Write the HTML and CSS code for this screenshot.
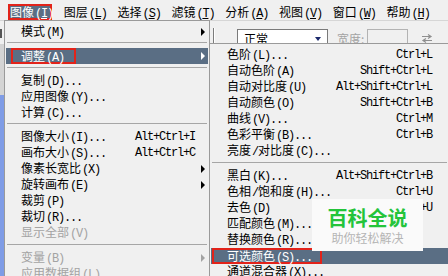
FILE: index.html
```html
<!DOCTYPE html>
<html lang="zh-CN">
<head>
	<meta charset="UTF-8">
	<meta name="viewport" content="width=device-width, initial-scale=1.0">
	<title>图像 - 调整</title>
	<link rel="stylesheet" href="styles.css">
</head>
<body>
	<div class="menubar">
		<div class="mb-item on">图像<span class="mk">(<u>I</u>)</span></div>
		<div class="mb-item">图层<span class="mk">(<u>L</u>)</span></div>
		<div class="mb-item">选择<span class="mk">(<u>S</u>)</span></div>
		<div class="mb-item">滤镜<span class="mk">(<u>T</u>)</span></div>
		<div class="mb-item">分析<span class="mk">(<u>A</u>)</span></div>
		<div class="mb-item">视图<span class="mk">(<u>V</u>)</span></div>
		<div class="mb-item">窗口<span class="mk">(<u>W</u>)</span></div>
		<div class="mb-item">帮助<span class="mk">(<u>H</u>)</span></div>
	</div>

	<div class="options">
		<span class="edge"></span>
		<span class="grip"></span>
		<div class="select"><span>正常</span><i class="caret"></i></div>
		<span class="field-label">宽度:</span>
		<span class="field"></span>
		<svg class="swap" width="12" height="9" viewBox="0 0 12 9">
			<path d="M1 2.5H9M7 0.5L10 2.5L7 4.5" fill="none" stroke="#8f8f8f" stroke-width="1.2"/>
			<path d="M11 6.5H3M5 4.5L2 6.5L5 8.5" fill="none" stroke="#8f8f8f" stroke-width="1.2"/>
		</svg>
	</div>

	<div class="workspace">
		<div class="dock"></div>
	</div>

	<!-- 图像 menu -->
	<div class="menu main">
		<div class="item"><span class="label">模式<span class="k">(M)</span></span><span class="arr"><i class="tri"></i></span></div>
		<div class="sep tight"></div>
		<div class="item on"><span class="label"><span class="mark">调整<span class="k">(A)</span></span></span><span class="arr"><i class="tri"></i></span></div>
		<div class="sep"></div>
		<div class="item"><span class="label">复制<span class="k">(D)...</span></span><span class="arr"></span></div>
		<div class="item"><span class="label">应用图像<span class="k">(Y)...</span></span><span class="arr"></span></div>
		<div class="item"><span class="label">计算<span class="k">(C)...</span></span><span class="arr"></span></div>
		<div class="sep tight"></div>
		<div class="item"><span class="label">图像大小<span class="k">(I)...</span></span><span class="sc">Alt+Ctrl+I</span><span class="arr"></span></div>
		<div class="item"><span class="label">画布大小<span class="k">(S)...</span></span><span class="sc">Alt+Ctrl+C</span><span class="arr"></span></div>
		<div class="item"><span class="label">像素长宽比<span class="k">(X)</span></span><span class="arr"><i class="tri"></i></span></div>
		<div class="item"><span class="label">旋转画布<span class="k">(E)</span></span><span class="arr"><i class="tri"></i></span></div>
		<div class="item"><span class="label">裁剪<span class="k">(P)</span></span><span class="arr"></span></div>
		<div class="item"><span class="label">裁切<span class="k">(R)...</span></span><span class="arr"></span></div>
		<div class="item off"><span class="label">显示全部<span class="k">(V)</span></span><span class="arr"></span></div>
		<div class="sep"></div>
		<div class="item off"><span class="label">变量<span class="k">(B)</span></span><span class="arr"><i class="tri"></i></span></div>
		<div class="item off"><span class="label">应用数据组<span class="k">(L)...</span></span><span class="arr"></span></div>
	</div>

	<!-- 调整 submenu -->
	<div class="menu sub">
		<div class="item"><span class="label">色阶<span class="k">(L)...</span></span><span class="sc">Ctrl+L</span><span class="arr"></span></div>
		<div class="item"><span class="label">自动色阶<span class="k">(A)</span></span><span class="sc">Shift+Ctrl+L</span><span class="arr"></span></div>
		<div class="item"><span class="label">自动对比度<span class="k">(U)</span></span><span class="sc">Alt+Shift+Ctrl+L</span><span class="arr"></span></div>
		<div class="item"><span class="label">自动颜色<span class="k">(O)</span></span><span class="sc">Shift+Ctrl+B</span><span class="arr"></span></div>
		<div class="item"><span class="label">曲线<span class="k">(V)...</span></span><span class="sc">Ctrl+M</span><span class="arr"></span></div>
		<div class="item"><span class="label">色彩平衡<span class="k">(B)...</span></span><span class="sc">Ctrl+B</span><span class="arr"></span></div>
		<div class="item"><span class="label">亮度<span class="k">/</span>对比度<span class="k">(C)...</span></span><span class="arr"></span></div>
		<div class="sep"></div>
		<div class="item"><span class="label">黑白<span class="k">(K)...</span></span><span class="sc">Alt+Shift+Ctrl+B</span><span class="arr"></span></div>
		<div class="item"><span class="label">色相<span class="k">/</span>饱和度<span class="k">(H)...</span></span><span class="sc">Ctrl+U</span><span class="arr"></span></div>
		<div class="item"><span class="label">去色<span class="k">(D)</span></span><span class="sc">Shift+Ctrl+U</span><span class="arr"></span></div>
		<div class="item"><span class="label">匹配颜色<span class="k">(M)...</span></span><span class="arr"></span></div>
		<div class="item"><span class="label">替换颜色<span class="k">(R)...</span></span><span class="arr"></span></div>
		<div class="item on"><span class="label"><span class="mark wide">可选颜色<span class="k">(S)...</span></span></span><span class="arr"></span></div>
		<div class="item"><span class="label">通道混合器<span class="k">(X)...</span></span><span class="arr"></span></div>
	</div>

	<div class="watermark">
		<div class="wm-title">百科全说</div>
		<div class="wm-sub">助你轻松解决</div>
	</div>
</body>
</html>
```

FILE: styles.css
```css
body {
    margin: 0;
    width: 448px;
    height: 276px;
    overflow: hidden;
    position: relative;
    background: #f0f0f0;
    color: #000;
    font: 12px "Noto Sans CJK SC", sans-serif;
}

/* top menu bar */
.menubar {
    display: flex;
    gap: 9.8px;
    height: 21px;
    padding: 4px 0 0 8px;
    box-sizing: border-box;
    border-bottom: 1px solid #d6d6d6;
}

.mb-item {
    width: 44px;
    height: 16px;
    line-height: 16px;
    padding-left: 2px;
    box-sizing: border-box;
    white-space: nowrap;
}

.mb-item.on {
    background: #5a6e84;
    color: #fff;
    box-shadow: inset 0 0 0 2px #e2231a;
}

/* latin parts keep the 6px half-width cells of the old bitmap font */
.mk, .k, .sc {
    font: 12px/16px "Liberation Mono", monospace;
    letter-spacing: -1.2px;
}

.k, .mk {
    padding-left: 1px;
}

/* options bar */
.options {
    display: flex;
    align-items: flex-start;
    height: 23px;
    padding-top: 8px;
    box-sizing: border-box;
}

.edge {
    width: 2px;
    height: 9px;
    background: #555;
}

.grip {
    width: 1px;
    height: 16px;
    margin: -1px 0 0 211px;
    background: #7c7c7c;
    border-right: 1px solid #fff;
}

.select {
    display: flex;
    align-items: center;
    width: 91px;
    height: 20px;
    margin-left: 22px;
    padding-left: 6px;
    box-sizing: border-box;
    background: #fff;
    border: 1px solid #7a7a7a;
    line-height: 18px;
}

.caret {
    margin: 0 6px 0 auto;
    border-top: 4px solid #1c2a6c;
    border-left: 3.5px solid transparent;
    border-right: 3.5px solid transparent;
}

.field-label {
    width: 30px;
    margin-left: 9px;
    line-height: 20px;
    color: #a3a3a3;
}

.field {
    width: 41px;
    height: 20px;
    box-sizing: border-box;
    border: 1px solid #b3b3b3;
}

.swap {
    margin: 5px 0 0 13px;
}

.workspace {
    height: 232px;
    display: flex;
}

.dock {
    width: 4px;
    background: linear-gradient(#d4d4d4 0 51px, #7f9ce6 51px);
}

/* dropdown menus */
.menu {
    position: absolute;
    background: #f0f0f0;
    border: 1px solid #9a9a9a;
    padding: 3px 1px;
    box-sizing: border-box;
}

.menu.main {
    left: 4px;
    top: 20px;
    width: 206px;
    z-index: 1;
}

.menu.sub {
    left: 209px;
    top: 43px;
    width: 241px;
    z-index: 2;
}

.item {
    display: flex;
    align-items: center;
    height: 16px;
    line-height: 16px;
    padding-left: 15px;
    white-space: nowrap;
}

.sub .item {
    padding-left: 16px;
    padding-right: 3px;
}

.item .label {
    flex: 1;
}

.item .arr {
    width: 13px;
    height: 16px;
    display: flex;
    align-items: center;
    justify-content: flex-end;
    padding-right: 3px;
    box-sizing: border-box;
}

.tri {
    border-left: 4px solid currentColor;
    border-top: 4px solid transparent;
    border-bottom: 4px solid transparent;
}

.item.on {
    background: #5a6e84;
    color: #fff;
}

.item.off {
    color: #a3a3a3;
}

.mark {
    display: inline-block;
    width: 65px;
    height: 16px;
    margin-left: -10px;
    padding-left: 10px;
    box-sizing: border-box;
    box-shadow: inset 0 0 0 2px #e2231a;
}

.mark.wide {
    width: 110px;
    margin-left: -15px;
    padding-left: 15px;
}

.sep {
    height: 9px;
    padding: 3px 1px 0;
    box-sizing: border-box;
}

.sep.tight {
    height: 8px;
    padding-top: 2px;
}

.sep::before {
    content: '';
    display: block;
    border-top: 1px solid #a6a6a6;
}

/* watermark */
.watermark {
    position: absolute;
    left: 312px;
    top: 199px;
    width: 111px;
    height: 52px;
    z-index: 3;
    background: #fafafa;
    text-align: center;
    padding-top: 8px;
    box-sizing: border-box;
}

.wm-title {
    font-size: 20px;
    font-weight: bold;
    line-height: 22px;
    color: #24c43a;
}

.wm-sub {
    margin-top: 2px;
    font-size: 12px;
    line-height: 14px;
    color: #b5b5b5;
}
```
